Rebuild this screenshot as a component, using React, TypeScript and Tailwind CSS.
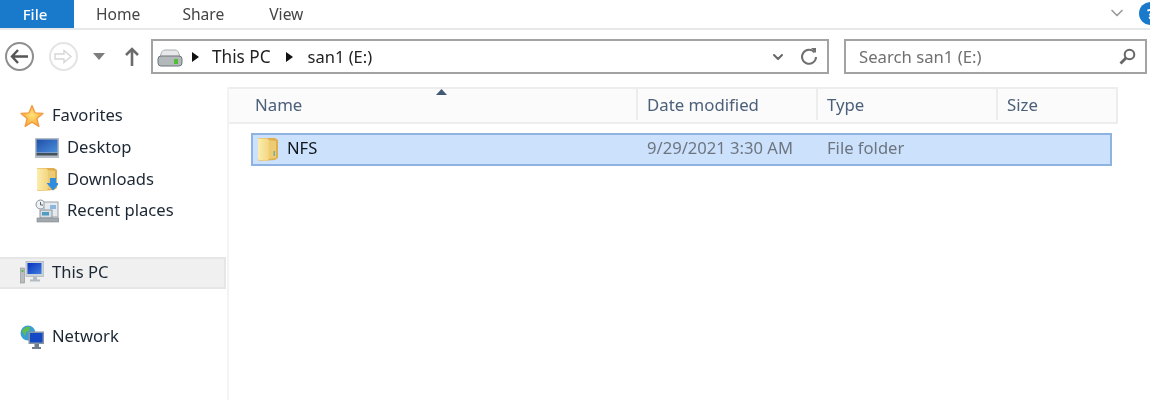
import { ChevronDown } from "lucide-react";

function StarIcon() {
  return (
    <svg width="24" height="24" viewBox="0 0 24 24">
      <defs>
        <radialGradient id="star" cx="50%" cy="45%" r="55%">
          <stop offset="0%" stopColor="#ffe27a" />
          <stop offset="100%" stopColor="#f9a934" />
        </radialGradient>
      </defs>
      <path d="M12 1.500l3 7.300 8 .6-6.100 5.100 2 8L12 18.100 5.100 22.500l2-8L1 9.400l8-.6z" fill="url(#star)" stroke="#f29a45" strokeWidth="1.300" strokeLinejoin="round" />
    </svg>
  );
}

function DesktopIcon() {
  return (
    <svg width="24" height="20" viewBox="0 0 24 20">
      <defs>
        <linearGradient id="desk" x1="0" y1="0" x2="1" y2="1">
          <stop offset="0%" stopColor="#1f4fa8" />
          <stop offset="100%" stopColor="#4b8fdc" />
        </linearGradient>
      </defs>
      <rect x="0" y="0" width="24" height="20" fill="#b4bdc6" />
      <rect x="1.500" y="1.500" width="21" height="13" fill="url(#desk)" />
      <rect x="1.500" y="15" width="21" height="2.500" fill="#44505c" />
    </svg>
  );
}

function FolderIcon({ id, arrow }: { id: string; arrow?: boolean }) {
  return (
    <svg width="22" height="25" viewBox="0 0 22 25">
      <defs>
        <linearGradient id={id} x1="0" y1="0" x2="1" y2="0">
          <stop offset="0%" stopColor="#fbeeb0" />
          <stop offset="100%" stopColor="#f3d57f" />
        </linearGradient>
      </defs>
      <path d="M1 1h17l3 2v18l-3 2-15 1a2 2 0 0 1-2-2z" fill="#dfae4f" />
      <path d="M1 1.500h9.500L12 3v19l-1.500 1.500H3a2 2 0 0 1-2-2z" fill={`url(#${id})`} />
      <path d="M12 3l7 1v17l-7 1z" fill="#eccb72" />
      {arrow ? (
        <path d="M14 11h6v5h3.500L17 23.500 10.500 16H14z" fill="#2f8de0" />
      ) : (
        <rect x="16.500" y="14" width="1.500" height="5" fill="#6fb0a0" />
      )}
    </svg>
  );
}

function RecentIcon() {
  return (
    <svg width="24" height="24" viewBox="0 0 24 24">
      <circle cx="5.500" cy="5.500" r="4.500" fill="#eef1f3" stroke="#8b9298" />
      <path d="M5.500 3v3h2.500" stroke="#5c6368" fill="none" />
      <rect x="9" y="3" width="14" height="15" fill="#e6eaee" stroke="#98a1a8" />
      <rect x="15" y="6" width="6" height="4" fill="#8ab6e0" />
      <rect x="5" y="11" width="12" height="8" fill="#d8dee2" stroke="#8e979e" />
      <rect x="7" y="13" width="7" height="3.500" fill="#4f9dc4" />
      <rect x="2" y="19" width="22" height="4" fill="#a2aab0" stroke="#7f878d" strokeWidth="0.600" />
    </svg>
  );
}

function PcIcon() {
  return (
    <svg width="24" height="24" viewBox="0 0 24 24">
      <defs>
        <linearGradient id="pc" x1="0" y1="0" x2="1" y2="1">
          <stop offset="0%" stopColor="#0a2fbd" />
          <stop offset="100%" stopColor="#3f7fe0" />
        </linearGradient>
      </defs>
      <rect x="0.500" y="7" width="4" height="15" fill="#b9bdbf" stroke="#8a8f92" strokeWidth="0.600" />
      <rect x="1.500" y="9" width="2" height="2" fill="#57b947" />
      <rect x="6" y="0.500" width="18" height="15" fill="#cbd3d9" stroke="#a3adb4" strokeWidth="0.600" />
      <rect x="7.500" y="2" width="14" height="11" fill="url(#pc)" />
      <path d="M13 15.500h4v3h3v2H10v-2h3z" fill="#b4bbc0" />
    </svg>
  );
}

function NetworkIcon() {
  return (
    <svg width="24" height="24" viewBox="0 0 24 24">
      <circle cx="8" cy="8" r="7.500" fill="#3a9fd0" />
      <path d="M2 6c2-4 6-5 8-4l-1 4-3 1-1 4z" fill="#62bd4f" />
      <rect x="8.500" y="6.500" width="15.500" height="12.500" fill="#8496a6" />
      <rect x="10" y="8" width="12.500" height="9.500" fill="#1448c4" />
      <path d="M14.500 19h4.500v3h2v2h-9v-2h2.500z" fill="#6f7d88" />
    </svg>
  );
}

function DriveIcon() {
  return (
    <svg width="26" height="20" viewBox="0 0 26 20">
      <path d="M4 7c.5-2.500 2-4 4-4h10c2 0 3.500 1.500 4 4l2 5H2z" fill="#e6e8e9" stroke="#a9aeb0" />
      <rect x="1" y="9" width="24" height="10" rx="3" fill="#b3b8bb" stroke="#6f7578" />
      <rect x="17" y="12" width="4" height="5" fill="#4fbf38" />
    </svg>
  );
}

function Caret() {
  return (
    <svg width="9" height="12" viewBox="0 0 9 12" className="shrink-0">
      <path d="M1 1l7 5-7 5z" fill="#111" />
    </svg>
  );
}

function NavItem({ icon, label, indent }: { icon: React.ReactNode; label: string; indent?: boolean }) {
  return (
    <div className={`flex h-[31.7px] items-center ${indent ? "pl-[35px]" : "pl-5"} gap-2`}>
      <span className="flex w-6 shrink-0 items-center justify-center">{icon}</span>
      <span className="text-[16.6px] text-[#1c2733]">{label}</span>
    </div>
  );
}

export default function App() {
  return (
    <div className="flex h-[400px] w-[1150px] flex-col overflow-hidden bg-white font-['Noto_Sans','Open_Sans',sans-serif] blur-[0.4px]">
      {/* ribbon tabs */}
      <div className="flex h-[30px] shrink-0 items-stretch border-b-2 border-[#e6e8ea]">
        <div className="flex w-[74px] items-center justify-center bg-[#1979ca] pr-[4px] pt-[1px] text-[15px] font-medium text-white">File</div>
        <div className="ml-[22px] flex items-center pt-[2px] text-[15.600px] text-[#444]">Home</div>
        <div className="ml-[42px] flex items-center pt-[2px] text-[15.600px] text-[#444]">Share</div>
        <div className="ml-[45px] flex items-center pt-[2px] text-[15.600px] text-[#444]">View</div>
        <div className="ml-auto flex items-center gap-[12px] pb-[2px]">
          <ChevronDown size={20} strokeWidth={2} className="text-[#9a9a9a]" />
          <div className="mr-[-12px] flex h-[23px] w-[23px] items-center justify-center rounded-full bg-[#1979ca] text-[15px] font-bold text-white">?</div>
        </div>
      </div>

      {/* address row */}
      <div className="flex h-[57px] shrink-0 items-center pb-[4px] pl-[5px] pr-[3px]">
        <div className="flex h-[29px] w-[29px] items-center justify-center rounded-full border-2 border-[#8f8f8f]">
          <svg width="19" height="15" viewBox="0 0 19 15">
            <path d="M8 1L2 7.500 8 14M2.500 7.500H18" fill="none" stroke="#555" strokeWidth="2.400" />
          </svg>
        </div>
        <div className="ml-[15px] flex h-[29px] w-[29px] items-center justify-center rounded-full border-2 border-[#e4e4e4]">
          <svg width="19" height="15" viewBox="0 0 19 15">
            <path d="M1 5h9V1.500l7 6-7 6V10H1z" fill="none" stroke="#d6d6d6" strokeWidth="1.400" />
          </svg>
        </div>
        <svg width="12" height="7" viewBox="0 0 12 7" className="ml-[15px]">
          <path d="M0 0h12L6 7z" fill="#7d7d7d" />
        </svg>
        <svg width="14" height="19" viewBox="0 0 14 19" className="ml-[20px]">
          <path d="M1 8l6-6 6 6M7 2.500V19" fill="none" stroke="#6c6c6c" strokeWidth="2.600" />
        </svg>
        <div className="ml-[12px] flex h-[35px] w-[678px] items-center border-2 border-[#a3a3a3] pl-[4px]">
          <DriveIcon />
          <span className="ml-[8px]"><Caret /></span>
          <span className="ml-[12px] pt-[1px] text-[17.200px] text-[#222]">This PC</span>
          <span className="ml-[14px]"><Caret /></span>
          <span className="ml-[14px] pt-[1px] text-[16.500px] text-[#222]">san1 (E:)</span>
          <ChevronDown size={16} strokeWidth={3} className="ml-auto text-[#666]" />
          <svg width="18" height="19" viewBox="0 0 18 19" className="ml-[14px] mr-[9px]">
            <path d="M14.500 5.500A7 7 0 1 0 16 10" fill="none" stroke="#6f6f6f" strokeWidth="2" />
            <path d="M11 1l5 0v5z" fill="#6f6f6f" />
          </svg>
        </div>
        <div className="ml-[15px] flex h-[35px] w-[303px] items-center border-2 border-[#a3a3a3] pl-[13px]">
          <span className="pt-[1px] text-[16.700px] text-[#707070]">Search san1 (E:)</span>
          <svg width="17" height="17" viewBox="0 0 17 17" className="ml-auto mr-[9px]">
            <circle cx="10.500" cy="6.500" r="4.800" fill="none" stroke="#666" strokeWidth="2" />
            <path d="M7 10l-5.500 5.500" stroke="#666" strokeWidth="2.800" />
          </svg>
        </div>
      </div>

      <div className="flex min-h-0 flex-1">
        {/* navigation pane */}
        <div className="flex w-[229px] shrink-0 flex-col border-r-2 border-[#f3f3f3] pt-[13px]">
          <NavItem icon={<StarIcon />} label="Favorites" />
          <NavItem indent icon={<DesktopIcon />} label="Desktop" />
          <NavItem indent icon={<FolderIcon id="dl" arrow />} label="Downloads" />
          <NavItem indent icon={<RecentIcon />} label="Recent places" />
          <div className="mr-[1px] mt-[30px] flex h-[32px] items-center gap-2 border-2 border-l-0 border-[#e6e6e6] bg-[#f0f0f0] pl-5">
            <span className="flex w-6 shrink-0 items-center justify-center"><PcIcon /></span>
            <span className="text-[16.600px] text-[#1c2733]">This PC</span>
          </div>
          <div className="mt-[32px]">
            <NavItem icon={<NetworkIcon />} label="Network" />
          </div>
        </div>

        {/* file list */}
        <div className="flex min-w-0 flex-1 flex-col">
          <div className="relative flex h-[37px] w-[889px] shrink-0 border-2 border-l-0 border-[#ededed] bg-[#fbfbfb] pb-[2px] text-[16.800px] text-[#4c607a]">
            <svg width="11" height="6" viewBox="0 0 11 6" className="absolute left-[207px] top-0">
              <path d="M5.500 0L11 6H0z" fill="#425a78" />
            </svg>
            <div className="flex w-[409px] items-center border-r-2 border-[#ededed] pl-[26px]">Name</div>
            <div className="flex w-[180px] items-center border-r-2 border-[#ededed] pl-[9px]">Date modified</div>
            <div className="flex w-[180px] items-center border-r-2 border-[#ededed] pl-[9px]">Type</div>
            <div className="flex flex-1 items-center pl-[9px]">Size</div>
          </div>
          <div className="ml-[22px] mt-[9px] flex h-[33px] w-[861px] items-center border-2 border-[#8fb3e0] bg-[#cce1fb] pb-[3px]">
            <span className="ml-[4px] mt-[3px] flex w-[22px] justify-center"><FolderIcon id="nfs" /></span>
            <span className="ml-[8px] w-[360px] text-[16.600px] text-[#10151c]">NFS</span>
            <span className="w-[180px] text-[16.600px] text-[#6d7680]">9/29/2021 3:30 AM</span>
            <span className="text-[16.600px] text-[#6d7680]">File folder</span>
          </div>
        </div>
      </div>
    </div>
  );
}
